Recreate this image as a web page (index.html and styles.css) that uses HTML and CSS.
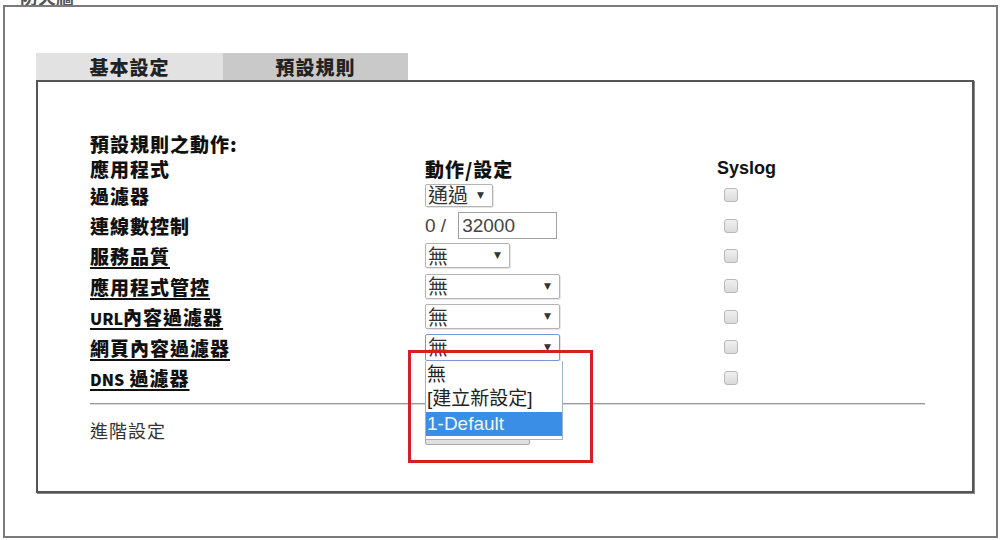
FILE: index.html
```html
<!DOCTYPE html>
<html lang="zh-Hant">
<head>
  <meta charset="UTF-8" />
  <meta name="viewport" content="width=device-width, initial-scale=1.0" />
  <title>預設規則</title>
  <link rel="stylesheet" href="styles.css">
</head>
<body>
  <div class="caption">防火牆</div>
  <div class="frame">
    <div class="tabs">
      <div class="tab">基本設定</div>
      <div class="tab active">預設規則</div>
    </div>

    <div class="panel">
      <div class="rules">
        <div class="title">預設規則之動作:</div>

        <div class="head">應用程式</div>
        <div class="head">動作/設定</div>
        <div class="head syslog">Syslog</div>

        <div class="label">過濾器</div>
        <div class="pick pick-xs"><select><option>通過</option></select></div>
        <div><input type="checkbox" class="check"></div>

        <div class="label">連線數控制</div>
        <div class="conn"><span>0 /</span><input type="text" value="32000"></div>
        <div><input type="checkbox" class="check"></div>

        <div class="label"><a href="#">服務品質</a></div>
        <div class="pick pick-sm"><select><option>無</option></select></div>
        <div><input type="checkbox" class="check"></div>

        <div class="label"><a href="#">應用程式管控</a></div>
        <div class="pick pick-md"><select><option>無</option></select></div>
        <div><input type="checkbox" class="check"></div>

        <div class="label"><a href="#"><span class="en">URL</span>內容過濾器</a></div>
        <div class="pick pick-md"><select><option>無</option></select></div>
        <div><input type="checkbox" class="check"></div>

        <div class="label"><a href="#">網頁內容過濾器</a></div>
        <div class="pick pick-md open">
          <select><option>無</option></select>
          <ul class="menu">
            <li>無</li>
            <li>[建立新設定]</li>
            <li class="sel">1-Default</li>
          </ul>
        </div>
        <div><input type="checkbox" class="check"></div>

        <div class="label"><a href="#"><span class="en">DNS</span> 過濾器</a></div>
        <div></div>
        <div><input type="checkbox" class="check"></div>
      </div>

      <hr class="divider">

      <div class="advanced">
        <span class="adv-label">進階設定</span>
        <button class="adv-btn" aria-label="編輯"></button>
      </div>

      <div class="highlight"></div>
    </div>
  </div>
</body>
</html>
```

FILE: styles.css
```css
body {
  margin: 0;
  background: #fff;
  color: #111;
  font-family: "Liberation Sans", "Noto Sans CJK TC", sans-serif;
  overflow: hidden;
}

.caption {
  height: 5px;
  overflow: hidden;
  display: flex;
  align-items: flex-end;
  padding-left: 20px;
  font: bold 18px/18px "Noto Sans CJK TC", sans-serif;
  color: #555;
}

.frame {
  margin-left: 3px;
  width: 995px;
  height: 533px;
  box-sizing: border-box;
  border: 2px solid #7a7a7a;
}

.tabs {
  display: flex;
  margin: 46px 0 0 31px;
}

.tab {
  width: 187px;
  height: 27px;
  display: flex;
  align-items: center;
  justify-content: center;
  background: #e2e2e2;
  font: 900 19px/1 "Noto Sans CJK TC", sans-serif;
  letter-spacing: 1px;
  color: #222;
}

.tab.active {
  width: 185px;
  background: #c9c9c9;
}

.panel {
  position: relative;
  margin-left: 31px;
  width: 938px;
  height: 413px;
  box-sizing: border-box;
  border: 2px solid #555;
  box-shadow: 1px 1px 0 #888;
  padding: 48px 0 0 52px;
}

.rules {
  display: grid;
  grid-template-columns: 335px 292px 1fr;
  grid-template-rows: 26px 24px repeat(7, 30.4px);
  align-items: center;
}

.title {
  grid-column: 1 / -1;
}

.title,
.head,
.label {
  font: 900 19px/1 "Noto Sans CJK TC", sans-serif;
  letter-spacing: 1px;
  color: #111;
}

.head.syslog {
  font: bold 18px/1 "Liberation Sans", sans-serif;
  letter-spacing: 0;
}

.label a {
  color: inherit;
  text-decoration: underline;
  text-decoration-thickness: 2px;
  text-underline-offset: 3px;
}

.en {
  font-size: 16px;
  letter-spacing: 0;
}

/* select boxes */
.pick {
  position: relative;
}

.pick select {
  display: block;
  appearance: none;
  width: 100%;
  height: 25px;
  margin: 0;
  padding: 0 0 0 2px;
  border: 1px solid #b4b4b4;
  border-radius: 2px;
  background: #fff;
  box-shadow: 1px 1px 0 #e6e6e6;
  font: 20px/1 "Noto Sans CJK TC", sans-serif;
  color: #333;
}

.pick::after {
  content: "▼";
  position: absolute;
  right: 9px;
  top: 12px;
  transform: translateY(-50%);
  font: 9px/1 "DejaVu Sans", sans-serif;
  color: #333;
  pointer-events: none;
}

.pick-xs { width: 68px; }
.pick-xs select { height: 23px; }
.pick-xs::after { top: 11px; }
.pick-sm { width: 85px; }
.pick-md { width: 135px; }

.pick.open select {
  height: 27px;
  border-color: #7d9acb;
}

.pick.open::after { top: 13px; }

.menu {
  position: absolute;
  left: 0;
  top: 27px;
  width: 138px;
  box-sizing: border-box;
  margin: 0;
  padding: 2px 0 3px;
  list-style: none;
  border: 1px solid #9fb3cf;
  border-top: 0;
  background: #fff;
  font: 19px "Liberation Sans", "Noto Sans CJK TC", sans-serif;
  color: #222;
  z-index: 2;
}

.menu li {
  height: 24.5px;
  line-height: 24px;
  padding-left: 1px;
  white-space: nowrap;
}

.menu li.sel {
  background: #3a8ee6;
  color: #eef6ff;
}

.conn {
  display: flex;
  align-items: center;
  font: 19px "Liberation Sans", sans-serif;
  color: #444;
}

.conn span {
  margin-right: 12px;
}

.conn input {
  width: 99px;
  height: 27px;
  box-sizing: border-box;
  margin: 0;
  padding: 0 3px;
  border: 1px solid #a0a0a0;
  font: 19px "Liberation Sans", sans-serif;
  color: #444;
}

.check {
  display: block;
  appearance: none;
  width: 14px;
  height: 14px;
  margin: 0 0 0 7px;
  border: 1px solid #b9b9b9;
  border-radius: 3px;
  background: linear-gradient(#f0f0f0, #dadada);
}

.divider {
  width: 835px;
  height: 0;
  margin: 10px 0 0;
  border: 0;
  border-top: 1px solid #9a9a9a;
  border-bottom: 1px solid #d8d8d8;
}

.advanced {
  display: flex;
  align-items: center;
  height: 50px;
}

.adv-label {
  width: 335px;
  font: 18px/1 "Noto Sans CJK TC", sans-serif;
  letter-spacing: 1px;
  color: #333;
}

.adv-btn {
  width: 105px;
  height: 30px;
  padding: 0;
  border: 1px solid #a8a8a8;
  border-radius: 2px;
  background: linear-gradient(#f6f6f6, #dedede);
}

.highlight {
  position: absolute;
  left: 370px;
  top: 268px;
  width: 185px;
  height: 113px;
  box-sizing: border-box;
  border: 3px solid #d81e25;
  z-index: 3;
}
```
